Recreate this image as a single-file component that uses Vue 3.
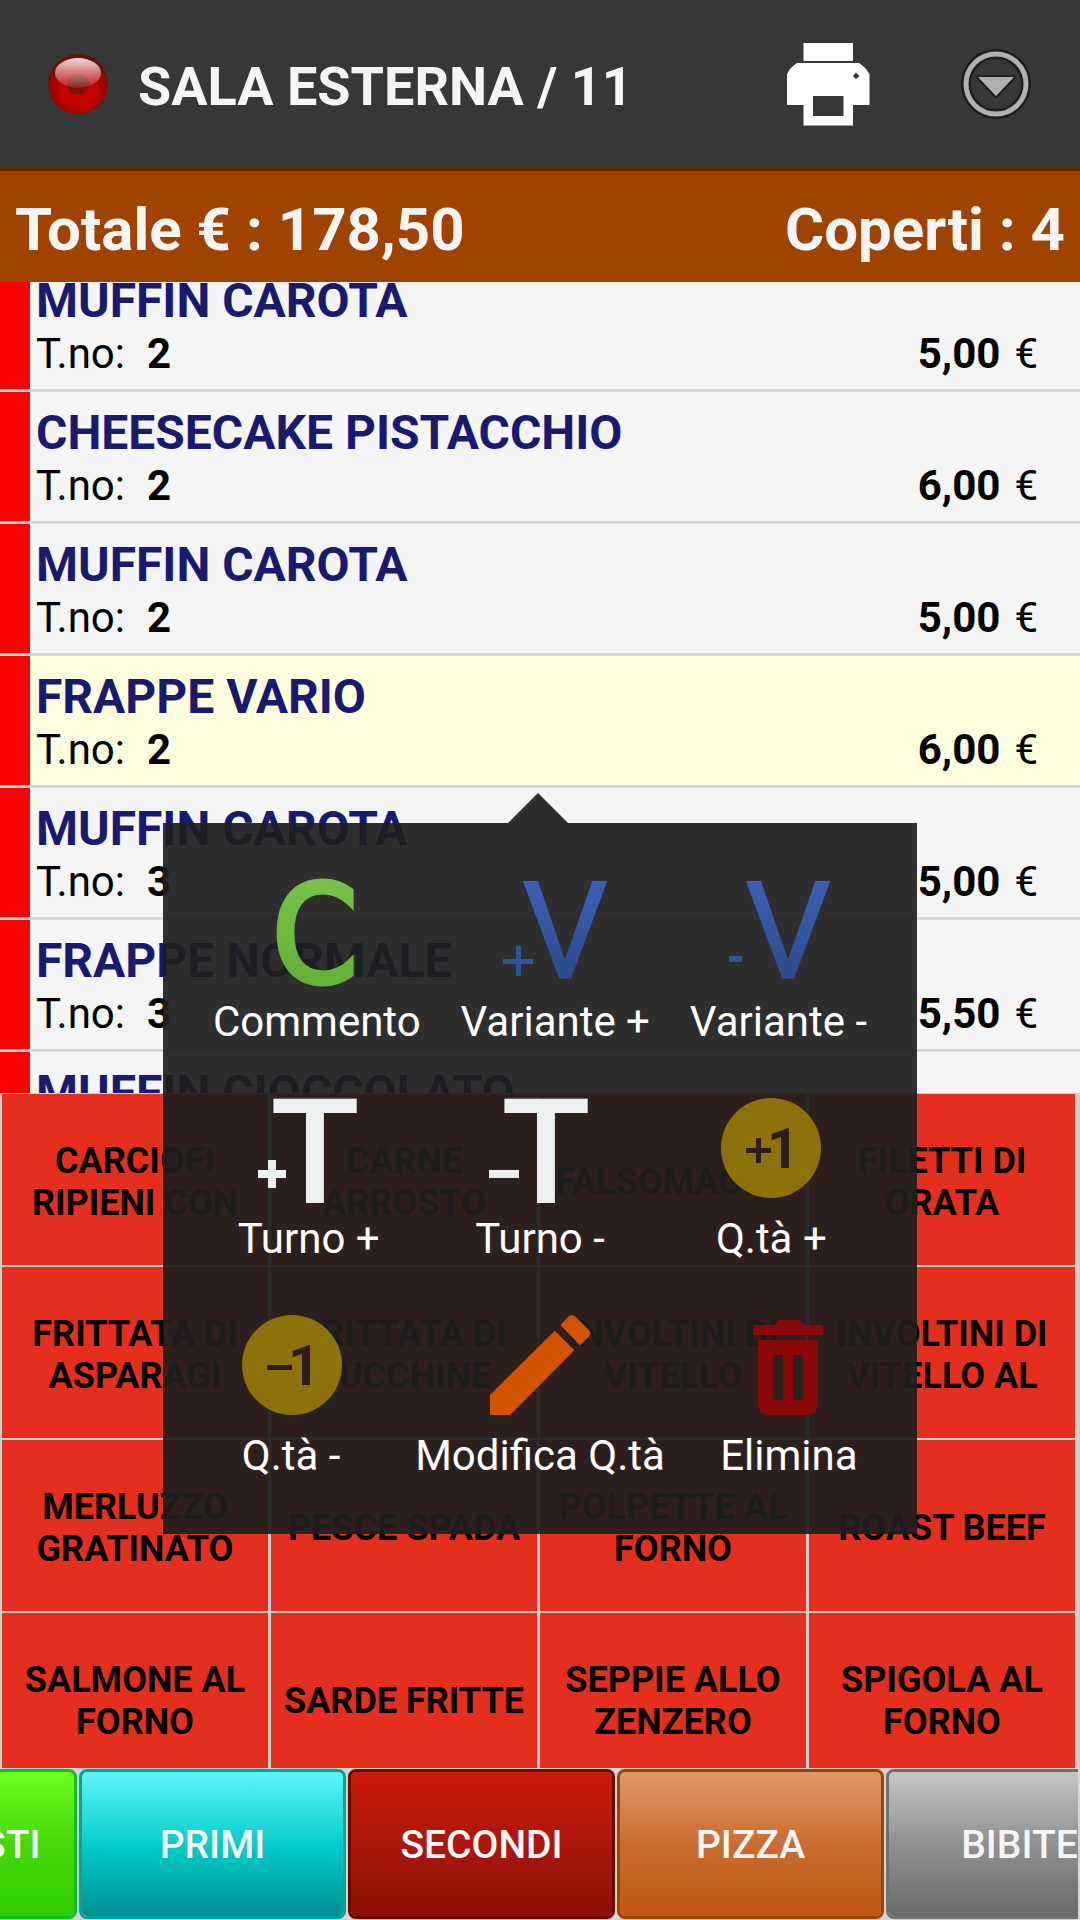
<script setup>
import { ref } from 'vue'

const orders = [
  { name: 'MUFFIN CAROTA', turn: 2, price: '5,00' },
  { name: 'CHEESECAKE PISTACCHIO', turn: 2, price: '6,00' },
  { name: 'MUFFIN CAROTA', turn: 2, price: '5,00' },
  { name: 'FRAPPE VARIO', turn: 2, price: '6,00' },
  { name: 'MUFFIN CAROTA', turn: 3, price: '5,00' },
  { name: 'FRAPPE NORMALE', turn: 3, price: '5,50' },
  { name: 'MUFFIN CIOCCOLATO', turn: 3, price: '5,00' },
]
const selected = ref(3)

const dishes = [
  'CARCIOFI RIPIENI CON', 'CARNE ARROSTO', 'FALSOMAGRO', 'FILETTI DI ORATA',
  'FRITTATA DI ASPARAGI', 'FRITTATA DI ZUCCHINE', 'INVOLTINI DI VITELLO', 'INVOLTINI DI VITELLO AL',
  'MERLUZZO GRATINATO', 'PESCE SPADA', 'POLPETTE AL FORNO', 'ROAST BEEF',
  'SALMONE AL FORNO', 'SARDE FRITTE', 'SEPPIE ALLO ZENZERO', 'SPIGOLA AL FORNO',
]

const categories = [
  { label: 'ANTIPASTI', tone: 'green' },
  { label: 'PRIMI', tone: 'cyan' },
  { label: 'SECONDI', tone: 'red' },
  { label: 'PIZZA', tone: 'orange' },
  { label: 'BIBITE', tone: 'grey' },
]
</script>

<template>
  <div class="page">
    <header class="topbar">
      <svg class="ball" viewBox="0 0 60 60" aria-hidden="true">
        <defs>
          <radialGradient id="ballFill" cx="50%" cy="58%" r="56%">
            <stop offset="0" stop-color="#d80000" />
            <stop offset=".55" stop-color="#c20000" />
            <stop offset=".85" stop-color="#8a0800" />
            <stop offset="1" stop-color="#5c1400" />
          </radialGradient>
          <linearGradient id="ballGloss" x1="0" y1="0" x2="0" y2="1">
            <stop offset="0" stop-color="#fff" stop-opacity=".85" />
            <stop offset="1" stop-color="#fff" stop-opacity=".08" />
          </linearGradient>
        </defs>
        <circle cx="30" cy="30" r="30" fill="url(#ballFill)" />
        <circle cx="30" cy="30" r="11" fill="#7d1200" />
        <ellipse cx="30" cy="19" rx="23" ry="15" fill="url(#ballGloss)" />
      </svg>
      <h1>SALA ESTERNA / 11</h1>
      <button class="icon-btn print" aria-label="Stampa">
        <svg width="84" height="84" viewBox="0 0 84 84">
          <path fill="#fff" d="M17.500 1H67V19H17.500Z" />
          <path fill="#fff" fill-rule="evenodd" d="M11 21H73L77 24 80 27 83.500 32V63H67V83.500H17.500V63H1V32L4 27 7 24ZM27 54H57.500V74H27ZM70 30.500L67 34 70 37 73.500 34Z" />
        </svg>
      </button>
      <button class="icon-btn" aria-label="Menu">
        <svg width="72" height="72" viewBox="0 0 72 72">
          <circle cx="36" cy="36" r="30" fill="none" stroke="#1f1f1f" stroke-width="10" />
          <circle cx="36" cy="36" r="30" fill="none" stroke="#b0b0b0" stroke-width="5" />
          <path d="M18 29H54L36 48Z" fill="#b0b0b0" stroke="#1f1f1f" stroke-width="4" stroke-linejoin="round" paint-order="stroke" />
        </svg>
      </button>
    </header>

    <section class="summary">
      <span>Totale € : 178,50</span>
      <span>Coperti : 4</span>
    </section>

    <main class="orders">
      <ul>
        <li v-for="(o, i) in orders" :key="i" :class="{ selected: i === selected }" @click="selected = i">
          <div class="name">{{ o.name }}</div>
          <div class="detail">
            <span>T.no:</span><strong class="turn">{{ o.turn }}</strong>
            <strong class="price">{{ o.price }}</strong><span>€</span>
          </div>
        </li>
      </ul>
    </main>

    <section class="dishes">
      <button v-for="(d, i) in dishes" :key="i">{{ d }}</button>
    </section>

    <nav class="tabs">
      <button v-for="c in categories" :key="c.label" :class="c.tone">{{ c.label }}</button>
    </nav>

    <div class="popup">
      <svg class="arrow" viewBox="0 0 60 30" aria-hidden="true"><path d="M0 30L30 0 60 30Z" /></svg>
      <div class="actions">
        <button>
          <svg viewBox="0 0 144 144">
            <defs>
              <linearGradient id="greenFill" x1="0" y1="0" x2="0" y2="1">
                <stop offset="0" stop-color="#79c74a" />
                <stop offset="1" stop-color="#62aa37" />
              </linearGradient>
            </defs>
            <text class="g-c" x="70" y="129">C</text>
          </svg>
          <span>Commento</span>
        </button>
        <button>
          <svg viewBox="0 0 144 144">
            <defs>
              <linearGradient id="blueFill" x1="0" y1="0" x2="0" y2="1">
                <stop offset=".2" stop-color="#3b60b4" />
                <stop offset=".9" stop-color="#2a4684" />
              </linearGradient>
            </defs>
            <text class="g-v" x="82" y="125">V</text>
            <path fill="#2f539c" d="M20 106H33V93H38V106H50V111H38V123H33V111H20Z" />
          </svg>
          <span>Variante +</span>
        </button>
        <button>
          <svg viewBox="0 0 144 144">
            <text class="g-v" x="82" y="125">V</text>
            <path fill="#2f539c" d="M23 103H36V109H23Z" />
          </svg>
          <span>Variante -</span>
        </button>
      </div>
      <div class="actions">
        <button>
          <svg viewBox="0 0 144 144">
            <text class="g-t" x="78" y="133">T</text>
            <path fill="#ecf0f1" d="M21 100H31V90H39V100H49V108H39V118H31V108H21Z" />
          </svg>
          <span>Turno +</span>
        </button>
        <button>
          <svg viewBox="0 0 144 144">
            <text class="g-t" x="78" y="133">T</text>
            <path fill="#ecf0f1" d="M21 100H51V108H21Z" />
          </svg>
          <span>Turno -</span>
        </button>
        <button>
          <svg viewBox="0 0 144 144">
            <circle cx="72" cy="78" r="50" fill="#8d720b" />
            <path fill="#2c1e1e" d="M47 78H57V68H62V78H72V83H62V93H57V83H47Z" />
            <text class="g-one" x="84" y="98">1</text>
          </svg>
          <span>Q.tà +</span>
        </button>
      </div>
      <div class="actions">
        <button>
          <svg viewBox="0 0 144 144">
            <circle cx="73" cy="78" r="50" fill="#8d720b" />
            <path fill="#2c1e1e" d="M48 78H73V83H48Z" />
            <text class="g-one" x="85" y="98">1</text>
          </svg>
          <span>Q.tà -</span>
        </button>
        <button>
          <svg viewBox="0 0 144 144">
            <g fill="#d35400" transform="translate(5.200 10.700) scale(5.590)">
              <path d="M3 17.400V21H6.600L18.100 9.400 14.600 5.900Z" />
              <path d="M15.600 4.900L17 3.400Q17.600 2.800 18.300 3.400L20.700 5.800Q21.300 6.400 20.700 7L19.100 8.500Z" />
            </g>
          </svg>
          <span>Modifica Q.tà</span>
        </button>
        <button>
          <svg viewBox="0 0 144 144">
            <path fill="#8b0808" fill-rule="evenodd" d="M36 38H57L62 33H82L87 38H106V48H36ZM41 53H101V118A10 10 0 0 1 91 128H51A10 10 0 0 1 41 118ZM56 68V113H66V68ZM76 68V113H86V68Z" />
          </svg>
          <span>Elimina</span>
        </button>
      </div>
    </div>
  </div>
</template>

<style>
body {
  margin: 0;
}
</style>

<style scoped>
* {
  box-sizing: border-box;
}
.page {
  position: relative;
  display: flex;
  flex-direction: column;
  height: 100vh;
  overflow: hidden;
  font-family: Roboto, sans-serif;
  background: #d6d6d6;
}
button {
  border: 0;
  padding: 0;
  background: none;
  font-family: inherit;
  cursor: pointer;
}
svg {
  display: block;
}
.topbar {
  flex: none;
  display: flex;
  align-items: center;
  height: 168px;
  padding: 0 48px;
  background: #373737;
}
.ball {
  width: 60px;
  height: 60px;
}
h1 {
  flex: 1;
  margin: 0;
  padding: 5px 0 0 30px;
  font-size: 54px;
  line-height: 63px;
  font-weight: 700;
  color: #f5f5f5;
}
.print {
  margin-right: 90px;
}
.summary {
  flex: none;
  display: flex;
  align-items: center;
  justify-content: space-between;
  height: 114px;
  padding: 6px 15px 0;
  border-top: 3px solid #612b00;
  background: linear-gradient(#993f00, #a04300 8px);
  font-size: 60px;
  line-height: 70px;
  font-weight: 700;
  color: #f5f5f5;
}
.orders {
  flex: 1;
  min-height: 0;
  overflow: hidden;
  background: #f5f5f5;
}
/* the list is scrolled part of the way past its first row */
ul {
  margin: -22px 0 0;
  padding: 0;
  list-style: none;
}
li {
  position: relative;
  height: 132px;
  padding: 12px 42px 0 36px;
  border-bottom: 3px solid #d6d6d6;
  background: linear-gradient(90deg, #f00 30px, #f5f5f5 30px);
}
li.selected {
  background: linear-gradient(90deg, #f00 30px, #ffffe0 30px);
}
.name {
  font-size: 48px;
  line-height: 57px;
  font-weight: 700;
  color: #191970;
}
.detail {
  display: flex;
  font-size: 42px;
  line-height: 49px;
  color: #000;
}
.turn {
  margin-left: 22px;
}
.price {
  margin-left: auto;
  margin-right: 14px;
}
.dishes {
  flex: none;
  display: grid;
  grid-template-columns: repeat(4, 1fr);
  grid-auto-rows: 171px;
  gap: 2px 3px;
  height: 675px;
  padding: 1px 5px 0 2px;
  overflow: hidden;
  background: #cecece;
}
.dishes button {
  padding: 4px 12px 0;
  background: #e52f1e;
  font-size: 36px;
  line-height: 42px;
  font-weight: 700;
  color: #000;
}
.tabs {
  flex: none;
  display: flex;
  justify-content: flex-end;
  gap: 2px;
  height: 152px;
  margin-right: 2px;
  padding: 1px 0;
  overflow: hidden;
}
.tabs button {
  flex: none;
  width: 267px;
  padding-top: 2px;
  border-width: 3px;
  border-style: solid;
  border-radius: 8px;
  font-size: 39px;
  font-weight: 500;
  color: #f5f5f5;
}
/* the strip is scrolled sideways, so its last tab runs off the edge */
.tabs button:last-child {
  margin-right: -75px;
}
.tabs .green {
  border-color: #06c41c;
  background: linear-gradient(#6cff22, #46d708 50%, #30cc00) padding-box;
}
.tabs .cyan {
  border-color: #00a3a3;
  background: linear-gradient(#5ff6f6, #00c8c8 55%, #009090) padding-box;
}
.tabs .red {
  border-color: #6e0800;
  background: linear-gradient(#cb1b08, #ab180c 50%, #880f05) padding-box;
}
.tabs .orange {
  border-color: #9c4300;
  background: linear-gradient(#e29766, #ca6c30 50%, #c05810) padding-box;
}
.tabs .grey {
  border-color: #707070;
  background: linear-gradient(#c6c6c6, #909090 50%, #6a6a6a) padding-box;
}
.popup {
  position: absolute;
  top: 823px;
  left: 15%;
  right: 15%;
  margin: 0 1px;
  padding: 30px;
  background: rgba(30, 30, 30, 0.93);
}
.arrow {
  position: absolute;
  bottom: 100%;
  left: 50%;
  width: 60px;
  height: 30px;
  margin-left: -32px;
  fill: rgba(30, 30, 30, 0.93);
}
.actions {
  display: flex;
}
.actions button {
  flex: 1 1 auto;
  display: flex;
  flex-direction: column;
  align-items: center;
  padding-bottom: 24px;
  font-size: 42px;
  line-height: 49px;
  color: #fff;
}
.actions svg {
  width: 144px;
  height: 144px;
}
.actions text {
  text-anchor: middle;
}
.g-c {
  font: 136px "DejaVu Sans Condensed", "DejaVu Sans", sans-serif;
  fill: url(#greenFill);
  stroke: url(#greenFill);
  stroke-width: 5px;
}
.g-v {
  font: 136px Roboto, sans-serif;
  fill: url(#blueFill);
  stroke: url(#blueFill);
  stroke-width: 1px;
}
.g-t {
  font: 500 147px Roboto, sans-serif;
  fill: #ecf0f1;
}
.g-one {
  font: 700 56px Roboto, sans-serif;
  fill: #2c1e1e;
}
</style>
